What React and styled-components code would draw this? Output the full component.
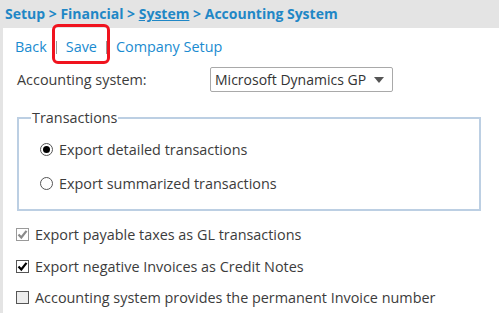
import React from 'react';
import styled, { createGlobalStyle } from 'styled-components';

const GlobalStyle = createGlobalStyle`
  body {
    margin: 0;
    background: #ffffff;
    font-family: 'Open Sans', 'DejaVu Sans', sans-serif;
  }
`;

const Page = styled.div`
  width: 499px;
  height: 329px;
  background: #ffffff;
  overflow: hidden;
`;

const Breadcrumb = styled.div`
  height: 28px;
  background: #e4e4e4;
  padding-left: 5px;
  display: flex;
  align-items: center;
  font-size: 14px;
  font-weight: bold;
  color: #1f87c6;
  box-sizing: border-box;
  padding-bottom: 1px;
`;

const Crumb = styled.span`
  text-decoration: ${p => (p.$underline ? 'underline' : 'none')};
  white-space: pre;
`;

const Panel = styled.div`
  border-left: 3px solid #e4e4e4;
  height: 285px;
  padding-left: 12px;
  box-sizing: border-box;
`;

const Toolbar = styled.div`
  height: 36px;
  display: flex;
  align-items: center;
  gap: 9px;
  font-size: 14.4px;
`;

const Link = styled.span`
  color: #1a8bd0;
  position: relative;
  ${p =>
    p.$highlighted &&
    `
    &::after {
      content: '';
      position: absolute;
      left: -14px;
      right: -13px;
      top: -13px;
      bottom: -8px;
      border: 3px solid #f0131e;
      border-radius: 6px;
    }
  `}
`;

const Separator = styled.span`
  width: 1px;
  height: 13px;
  background: #9a9a9a;
  margin-top: 2px;
`;

const FieldRow = styled.div`
  height: 27px;
  margin-top: 2px;
  padding-left: 2px;
  display: flex;
  align-items: center;
  font-size: 14.4px;
  color: #3c3c3c;
`;

const FieldLabel = styled.span`
  width: 193px;
`;

const Select = styled.div`
  width: 183px;
  height: 25px;
  box-sizing: border-box;
  border: 1px solid #a9a9a9;
  border-radius: 2px;
  display: flex;
  align-items: center;
  justify-content: space-between;
  padding: 0 8px 0 4px;
  font-size: 14px;
  color: #333;
`;

const Arrow = styled.span`
  width: 0;
  height: 0;
  border-left: 5px solid transparent;
  border-right: 5px solid transparent;
  border-top: 6px solid #555;
`;

const Fieldset = styled.fieldset`
  margin: 15px 18px 0 2px;
  padding: 5px 0 0 12px;
  border: 2px solid #bccfe3;
  height: 103px;
  box-sizing: border-box;
`;

const Legend = styled.legend`
  padding: 0 1px;
  font-size: 14.4px;
  color: #3c3c3c;
`;

const RadioGroup = styled.div`
  padding-left: 9px;
`;

const OptionRow = styled.div`
  height: ${p => p.$height || 32}px;
  display: flex;
  align-items: center;
  gap: 6px;
  font-size: 14.4px;
  color: #3c3c3c;
`;

const Radio = styled.span`
  width: 11px;
  height: 11px;
  border: 1px solid #555;
  border-radius: 50%;
  display: flex;
  align-items: center;
  justify-content: center;
  background: #fff;
  &::after {
    content: '';
    width: 7px;
    height: 7px;
    border-radius: 50%;
    background: ${p => (p.$checked ? '#000' : 'transparent')};
  }
`;

const Checks = styled.div`
  margin-top: 8px;
  padding-left: 1px;
`;

const Box = styled.span`
  width: 11px;
  height: 11px;
  border: 1px solid ${p => (p.$disabled ? '#9a9a9a' : '#555')};
  background: ${p => (p.$empty ? '#ededed' : '#fff')};
  display: flex;
  align-items: center;
  justify-content: center;
`;

const Check = ({ color }) => (
  <svg width="11" height="11" viewBox="0 0 11 11">
    <path d="M1.5 5.5 L4.3 8.5 L9.5 1.8" fill="none" stroke={color} strokeWidth="2.2" />
  </svg>
);

const CheckRow = ({ state, label }) => (
  <OptionRow $height={31.5}>
    <Box $disabled={state === 'disabled'} $empty={state === 'off'}>
      {state === 'disabled' && <Check color="#8a8a8a" />}
      {state === 'on' && <Check color="#000" />}
    </Box>
    {label}
  </OptionRow>
);

export default function App() {
  return (
    <Page>
      <GlobalStyle />
      <Breadcrumb>
        <Crumb>Setup &gt; Financial &gt; </Crumb>
        <Crumb $underline>System</Crumb>
        <Crumb> &gt; Accounting System</Crumb>
      </Breadcrumb>
      <Panel>
        <Toolbar>
          <Link>Back</Link>
          <Separator />
          <Link $highlighted>Save</Link>
          <Separator />
          <Link>Company Setup</Link>
        </Toolbar>
        <FieldRow>
          <FieldLabel>Accounting system:</FieldLabel>
          <Select>
            Microsoft Dynamics GP
            <Arrow />
          </Select>
        </FieldRow>
        <Fieldset>
          <Legend>Transactions</Legend>
          <RadioGroup>
            <OptionRow $height={34}>
              <Radio $checked />
              Export detailed transactions
            </OptionRow>
            <OptionRow $height={34}>
              <Radio />
              Export summarized transactions
            </OptionRow>
          </RadioGroup>
        </Fieldset>
        <Checks>
          <CheckRow state="disabled" label="Export payable taxes as GL transactions" />
          <CheckRow state="on" label="Export negative Invoices as Credit Notes" />
          <CheckRow state="off" label="Accounting system provides the permanent Invoice number" />
        </Checks>
      </Panel>
    </Page>
  );
}
